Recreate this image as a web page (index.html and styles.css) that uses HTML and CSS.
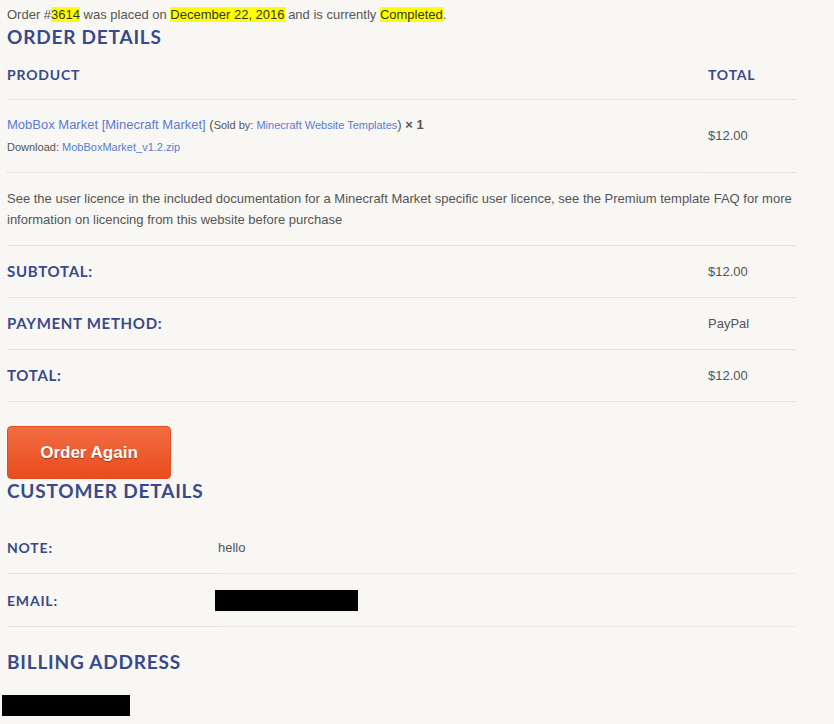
FILE: index.html
```html
<!DOCTYPE html>
<html>
<head>
<meta charset="utf-8">
<link rel="stylesheet" href="styles.css">
</head>
<body>
<div class="page">
  <p class="order-info">Order #<mark>3614</mark> was placed on <mark>December 22, 2016</mark> and is currently <mark>Completed</mark>.</p>

  <h2 class="sec-title">Order Details</h2>
  <table class="order-table">
    <thead>
      <tr>
        <th class="col-product">Product</th>
        <th class="col-total">Total</th>
      </tr>
    </thead>
    <tbody>
      <tr class="item-row">
        <td class="col-product dotted">
          <div class="item-line"><a href="#">MobBox Market [Minecraft Market]</a> <span class="sold">(<span class="small">Sold by: <a href="#">Minecraft Website Templates</a></span>)</span> <strong class="qty">× 1</strong></div>
          <div class="dl-line">Download: <a href="#">MobBoxMarket_v1.2.zip</a></div>
        </td>
        <td class="col-total">$12.00</td>
      </tr>
      <tr class="note-row">
        <td colspan="2">See the user licence in the included documentation for a Minecraft Market specific user licence, see the Premium template FAQ for more information on licencing from this website before purchase</td>
      </tr>
    </tbody>
    <tfoot>
      <tr>
        <th class="col-product">Subtotal:</th>
        <td class="col-total">$12.00</td>
      </tr>
      <tr>
        <th class="col-product">Payment Method:</th>
        <td class="col-total">PayPal</td>
      </tr>
      <tr>
        <th class="col-product">Total:</th>
        <td class="col-total">$12.00</td>
      </tr>
    </tfoot>
  </table>

  <div class="actions">
    <a href="#" class="btn-order">Order Again</a>
  </div>

  <h2 class="sec-title">Customer Details</h2>
  <table class="customer-table">
    <tr>
      <th>Note:</th>
      <td>hello</td>
    </tr>
    <tr>
      <th>Email:</th>
      <td><span class="redact redact-email"></span></td>
    </tr>
  </table>

  <h2 class="sec-title billing-title">Billing Address</h2>
  <address class="billing"><span class="redact redact-address"></span></address>
</div>
</body>
</html>
```
FILE: styles.css
```css
html, body {
  margin: 0;
  padding: 0;
  background: #f8f7f4;
}
body {
  font-family: "Liberation Sans", Arial, sans-serif;
  font-size: 13px;
  color: #555555;
}
.page {
  padding: 5px 0 0 7px;
  width: 789px;
}
.order-info {
  margin: 0;
  line-height: 20px;
}
.order-info mark {
  background: #ffff00;
  color: #333333;
}
.sec-title {
  margin: 0;
  font-family: Lato, "Open Sans", sans-serif;
  font-weight: 700;
  font-size: 19px;
  line-height: 24px;
  text-transform: uppercase;
  color: #384a8b;
  letter-spacing: 0.8px;
}
a {
  color: #5b7bd2;
  text-decoration: none;
}
table {
  border-collapse: collapse;
  border-spacing: 0;
  width: 789px;
}
.order-table {
  margin-top: 2px;
}
.order-table th,
.order-table td {
  text-align: left;
  padding: 15px 0;
  line-height: 21px;
  vertical-align: middle;
  border-bottom: 1px solid #e5e3df;
}
.order-table th {
  font-family: Lato, "Open Sans", sans-serif;
  font-weight: 700;
  font-size: 14px;
  text-transform: uppercase;
  color: #384a8b;
  letter-spacing: 0.8px;
}
.order-table tfoot th {
  font-size: 15px;
  letter-spacing: 0.7px;
}
.order-table thead th {
  padding: 14px 0;
  line-height: 20px;
}
.order-table .col-total {
  width: 88px;
  padding-left: 2px;
}
.order-table .item-row td {
  padding: 14px 0;
  line-height: 22px;
}
.order-table .item-row td.col-total {
  padding-left: 2px;
}
.order-table td.dotted {
  border-bottom: 1px dotted #dddbd6;
}
.sold {
  font-size: 13px;
}
.small {
  font-size: 11px;
}
.qty {
  font-weight: 700;
  color: #555555;
}
.dl-line {
  font-size: 11px;
}
.actions {
  margin-top: 24px;
}
.btn-order {
  display: flex;
  align-items: center;
  justify-content: center;
  box-sizing: border-box;
  width: 164px;
  height: 53px;
  border-radius: 4px;
  border: 1px solid #e44d1f;
  background: linear-gradient(to bottom, #f36c42 0%, #e94c1e 100%);
  color: #ffffff;
  font-family: "Liberation Sans", Arial, sans-serif;
  font-weight: 700;
  font-size: 17px;
  text-shadow: 0 1px 1px rgba(0, 0, 0, 0.35);
}
.customer-table {
  margin-top: 19px;
}
.customer-table th,
.customer-table td {
  text-align: left;
  padding: 15px 0;
  line-height: 21px;
  vertical-align: middle;
}
.customer-table th {
  width: 211px;
  font-family: Lato, "Open Sans", sans-serif;
  font-weight: 700;
  font-size: 14px;
  text-transform: uppercase;
  color: #384a8b;
  letter-spacing: 0.8px;
  border-bottom: 1px solid #e5e3df;
}
.customer-table td {
  border-bottom: 1px dotted #dddbd6;
}
.redact {
  display: inline-block;
  background: #000000;
  height: 21px;
  vertical-align: middle;
}
.redact-email {
  width: 143px;
  margin-left: -3px;
}
.billing-title {
  margin-top: 23px;
}
.billing {
  display: block;
  margin: 21px 0 0 -5px;
  font-style: normal;
  line-height: 21px;
}
.redact-address {
  width: 128px;
  vertical-align: top;
}
```
